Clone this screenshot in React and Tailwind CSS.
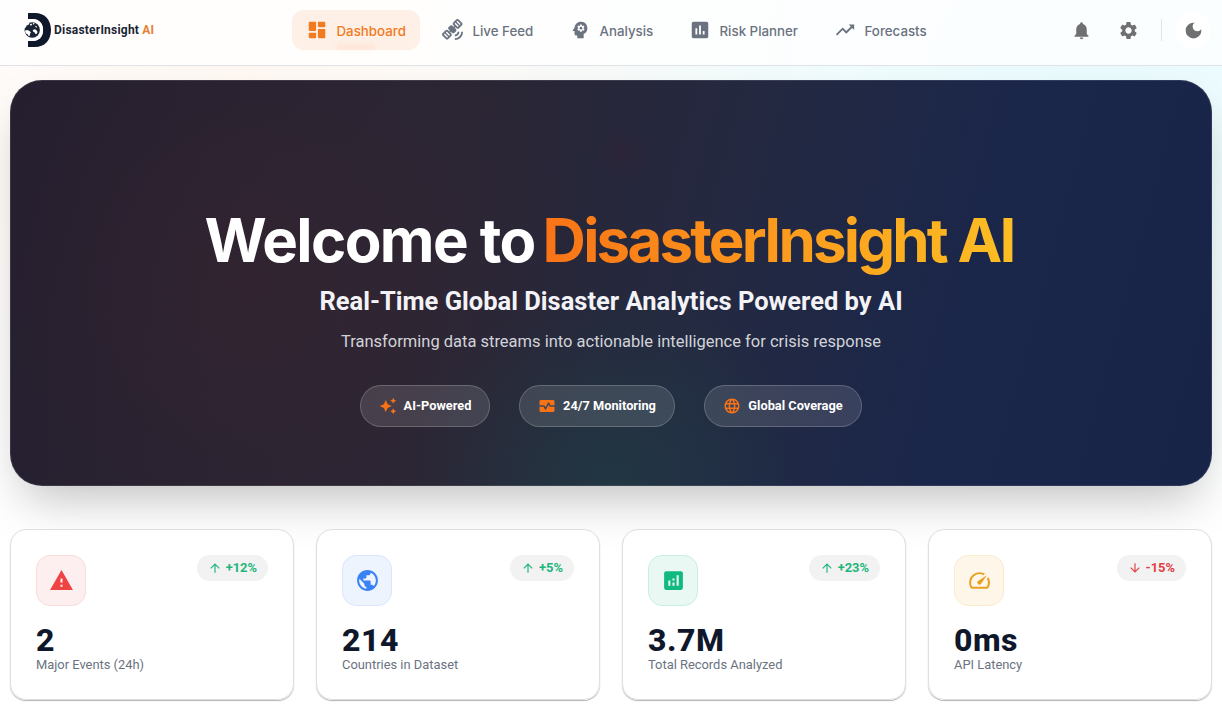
import React from "react";
import {
  MdSatelliteAlt,
  MdPsychology,
  MdAssessment,
  MdTrendingUp,
  MdNotifications,
  MdSettings,
  MdDarkMode,
  MdAutoAwesome,
  MdMonitorHeart,
  MdLanguage,
  MdWarning,
  MdPublic,
  MdAnalytics,
  MdSpeed,
  MdArrowUpward,
  MdArrowDownward,
} from "react-icons/md";

function DashboardIcon({ className }) {
  return (
    <svg viewBox="0 0 24 24" fill="currentColor" className={className}>
      <path d="M4 13h6c.55 0 1-.45 1-1V4c0-.55-.45-1-1-1H4c-.55 0-1 .45-1 1v8c0 .55.45 1 1 1zm0 8h6c.55 0 1-.45 1-1v-4c0-.55-.45-1-1-1H4c-.55 0-1 .45-1 1v4c0 .55.45 1 1 1zm10 0h6c.55 0 1-.45 1-1v-8c0-.55-.45-1-1-1h-6c-.55 0-1 .45-1 1v8c0 .55.45 1 1 1zM13 4v4c0 .55.45 1 1 1h6c.55 0 1-.45 1-1V4c0-.55-.45-1-1-1h-6c-.55 0-1 .45-1 1z" />
    </svg>
  );
}

function LogoMark() {
  return (
    <svg viewBox="0 0 28 36" className="h-9 w-7 shrink-0">
      <path
        fill="#0f172a"
        d="M4 1H11C20.500 1 27 7.500 27 18S20.500 35 11 35H4V29H8.500C14.800 29 19 25 19 18S14.800 7 8.500 7H4Z"
      />
      <path
        fill="#fff"
        d="M4 7H8.500C14.800 7 19 11 19 18S14.800 29 8.500 29H4Z"
      />
      <circle cx="8.2" cy="18" r="7.7" fill="#1b2434" />
      <g fill="#fff">
        <path d="M0 10h3.500l2 1.200-1 1.600-1.800.8-1 2L0 16.500z" />
        <path d="M5.800 12.200l1.600-.6.8 1.300-1.600.9z" />
        <path d="M9 11l1.600.2-.5 1.300-1.300-.2z" />
        <path d="M1 18.600l2.300-.6 2.300 1.100 1.300 1.300-1 1.500.2 1.600-1.500.4-1.300-1.800-1.700-.5z" />
        <path d="M8.800 18l2-.8 1.500.7 1.300 2.200-1 2-1.400-.3-.7-1.600-1.500-.7z" />
        <path d="M11.200 13.800l1.500.5.4 1.200-1.500-.3z" />
      </g>
    </svg>
  );
}

const navItems = [
  { label: "Dashboard", icon: DashboardIcon, active: true, width: "w-32" },
  { label: "Live Feed", icon: MdSatelliteAlt, width: "w-[119px]" },
  { label: "Analysis", icon: MdPsychology, width: "w-[112px]" },
  { label: "Risk Planner", icon: MdAssessment, width: "w-[137px]" },
  { label: "Forecasts", icon: MdTrendingUp, width: "w-[120px]" },
];

const features = [
  { label: "AI-Powered", icon: MdAutoAwesome, width: "w-[130px]" },
  { label: "24/7 Monitoring", icon: MdMonitorHeart, width: "w-[156px]" },
  { label: "Global Coverage", icon: MdLanguage, width: "w-[158px]" },
];

const stats = [
  { value: "2", label: "Major Events (24h)", change: "+12%", icon: MdWarning, tile: "bg-[#fdeff0] border-[#fadcdc] text-[#ef4444]" },
  { value: "214", label: "Countries in Dataset", change: "+5%", icon: MdPublic, tile: "bg-[#eef4fe] border-[#d9e6fc] text-[#3b82f6]" },
  { value: "3.7M", label: "Total Records Analyzed", change: "+23%", icon: MdAnalytics, tile: "bg-[#e9f8f3] border-[#c9efe2] text-[#10b981]" },
  { value: "0ms", label: "API Latency", change: "-15%", down: true, icon: MdSpeed, tile: "bg-[#fef6e9] border-[#fbebcd] text-[#e9a023]" },
];

function Header() {
  return (
    <header className="flex h-[66px] items-start border-b border-[#dfe3e8] bg-white/80">
      <div className="flex h-[60px] w-[292px] items-center pl-6">
        <LogoMark />
        <span className="ml-0.5 whitespace-nowrap font-[Roboto] text-[12px] font-bold tracking-[0.018em] text-[#1b2434]">
          DisasterInsight <span className="text-[#e58233]">AI</span>
        </span>
      </div>
      <nav className="flex gap-2 pt-2.5 font-[Inter]">
        {navItems.map(({ label, icon: Icon, active, width }) => (
          <div
            key={label}
            className={`relative flex h-10 shrink-0 items-center gap-[8.500px] whitespace-nowrap rounded-xl pl-3.5 text-[13.300px] font-medium ${width} ${
              active ? "bg-[#fef0e7] text-[#f27a1f]" : "text-[#6b7280]"
            }`}
          >
            <Icon className="h-[22px] w-[22px] shrink-0" />
            <span className="pt-0.5 leading-5">{label}</span>
            {active && (
              <span className="absolute bottom-0 left-11 h-1.5 w-10 rounded-full bg-[#f97316]/8 blur-[2px]" />
            )}
          </div>
        ))}
      </nav>
      <div className="ml-auto flex h-[60px] items-center text-[#6f7072]">
        <MdNotifications className="h-[21px] w-[21px]" />
        <MdSettings className="ml-[26px] h-[21px] w-[21px]" />
        <div className="ml-[22px] h-[22px] w-px bg-[#dfe4e6]" />
        <div className="ml-[13px] mr-[11px] flex h-9 w-9 items-center justify-center rounded-full bg-white">
          <MdDarkMode className="h-[21px] w-[21px]" />
        </div>
      </div>
    </header>
  );
}

function Hero() {
  return (
    <section className="mx-2.5 mt-3.5 flex h-[406px] flex-col items-center rounded-[32px] border border-white/10 bg-[radial-gradient(circle_at_51%_18%,rgba(70,28,48,0.2),transparent_4%),radial-gradient(circle_at_20%_50%,rgba(95,42,42,0.2),transparent_36%),radial-gradient(circle_at_50%_100%,rgba(30,72,72,0.45),transparent_28%),linear-gradient(105deg,#221e2f_0%,#292534_36%,#242941_58%,#1a264a_78%,#172347_100%)] bg-origin-border shadow-[0_24px_48px_-12px_rgba(0,0,0,0.25)]">
      <h1 className="mt-[125px] flex h-[68px] w-[813px] items-start justify-between whitespace-nowrap font-[Inter] text-[60px] font-bold leading-[68px]">
        <span className="tracking-[-1.600px] text-white">Welcome to</span>
        <span className="bg-linear-to-r from-[#f97316] to-[#fbbf24] bg-clip-text pb-2 pr-1 tracking-[-2.800px] text-transparent">
          DisasterInsight AI
        </span>
      </h1>
      <h2 className="mt-[9px] whitespace-nowrap font-[Roboto] text-[25.500px] font-bold leading-9 text-[#f3f3f7]">
        Real-Time Global Disaster Analytics Powered by AI
      </h2>
      <p className="mt-[9px] whitespace-nowrap font-[Roboto] text-[16.500px] leading-7 text-[#d2d3d9]">
        Transforming data streams into actionable intelligence for crisis response
      </p>
      <div className="mt-[29px] flex gap-[29px]">
        {features.map(({ label, icon: Icon, width }) => (
          <div
            key={label}
            className={`flex h-[42px] items-center justify-center gap-[7px] whitespace-nowrap rounded-full border border-white/20 bg-white/12 font-[Roboto] text-[12.800px] font-bold text-white ${width}`}
          >
            <Icon className="h-[18px] w-[18px] text-[#f97316]" />
            {label}
          </div>
        ))}
      </div>
    </section>
  );
}

function StatCard({ value, label, change, down, icon: Icon, tile }) {
  const Arrow = down ? MdArrowDownward : MdArrowUpward;
  return (
    <article className="h-[171px] rounded-2xl border border-[#dfdfe1] bg-white/80 px-[25px] pt-[25px] shadow-[0_1px_1px_rgba(0,0,0,0.3)]">
      <div className="flex items-start justify-between">
        <div className={`flex h-[51px] w-[50px] items-center justify-center rounded-[14px] border ${tile}`}>
          <Icon className="h-[25px] w-[25px]" />
        </div>
        <div
          className={`flex h-[26px] items-center gap-1 rounded-full bg-[#f2f2f2] px-[11px] text-[12.900px] font-bold ${
            down ? "text-[#de4144]" : "text-[#1eb67c]"
          }`}
        >
          <Arrow className="h-3.5 w-3.5" />
          {change}
        </div>
      </div>
      <div className="mt-[18px] text-[32px] font-extrabold leading-8 tracking-[0.5px] text-[#0f172a]">{value}</div>
      <div className="text-[12.900px] leading-[18px] text-[#6b7280]">{label}</div>
    </article>
  );
}

export default function App() {
  return (
    <div className="h-[716px] w-[1222px] overflow-hidden bg-[radial-gradient(ellipse_at_20%_10%,rgba(249,115,22,0.05),transparent_45%),radial-gradient(ellipse_at_90%_8%,rgba(34,211,238,0.1),transparent_48%)] bg-white font-[Roboto,sans-serif]">
      <Header />
      <Hero />
      <main className="mx-2.5 mt-[43px] grid grid-cols-4 gap-[22px]">
        {stats.map((item) => (
          <StatCard key={item.label} {...item} />
        ))}
      </main>
    </div>
  );
}
